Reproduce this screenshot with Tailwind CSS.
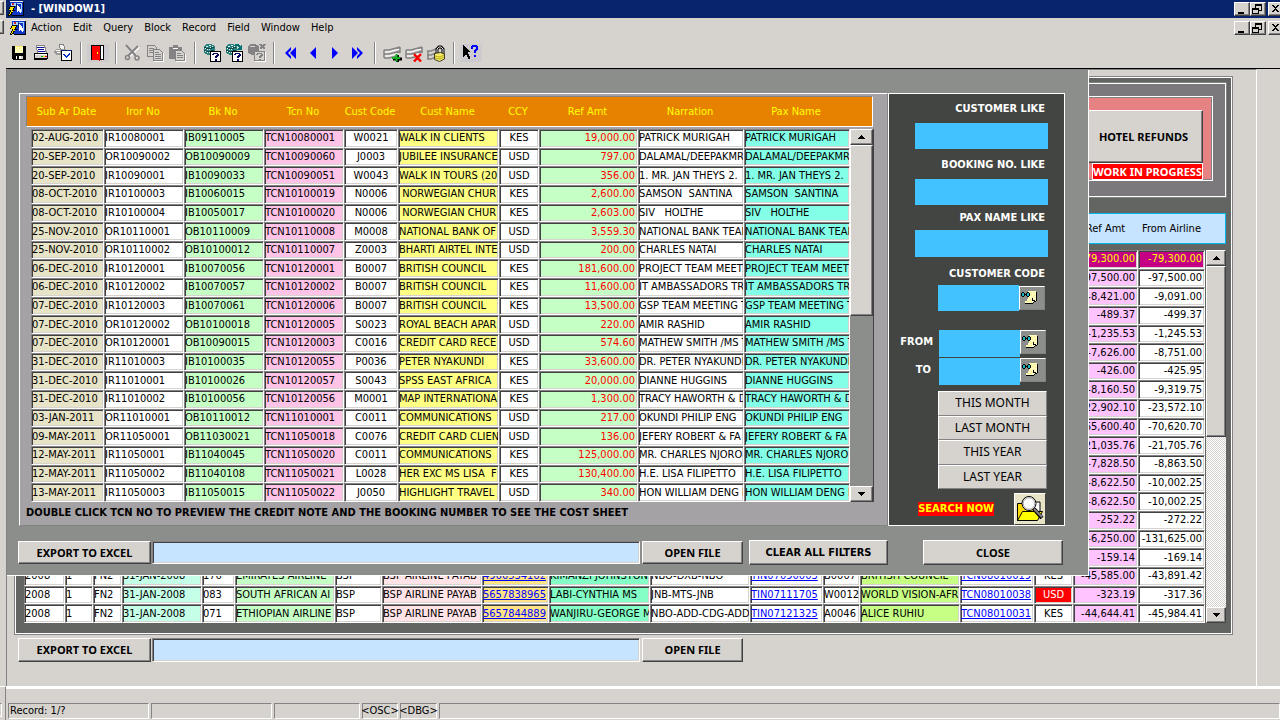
<!DOCTYPE html>
<html lang="en">
<head>
  <meta charset="UTF-8">
  <meta name="viewport" content="width=device-width, initial-scale=1.0">
  <title>WINDOW1</title>
  <script src="https://cdn.jsdelivr.net/npm/@tailwindcss/browser@4"></script>
</head>
<body class="relative h-screen overflow-hidden bg-[#d6d3ce] pl-[6px] flex flex-col text-[11px] leading-[14px] text-black font-['DejaVu_Sans_Condensed','Noto_Sans',sans-serif]">

  <!-- Shared shapes -->
  <svg class="hidden">
    <defs>
      <g id="appIcon" shape-rendering="crispEdges">
        <path fill="#f0f0f8" d="M2 0h13v1H2z"/>
        <path fill="#000" d="M15 1h1v14H4v-1h11z"/>
        <path fill="#1038c8" d="M2 1h13v13H4V9H2z"/>
        <path fill="#a8d4f8" d="M3 2h5v3H3zM9 2h5v1H9zM13 3h1v8h-1z"/>
        <path fill="#d02020" d="M4 2h2v2H4z"/>
        <path fill="#08246b" d="M8 3h1v5H8zM6 9h2v1H6z"/>
        <path fill="#fff" d="M9 4h1v7H9zM10 5h1v5h-1zM11 6h1v5h-1zM12 8h1v4h-1z"/>
        <path fill="#000" d="M2 5h5v2H6v2h1v1H5v2H4v2H2v1H0v-2h1v-2h1V9H0V8h1V6h1z"/>
        <path fill="#ffe800" d="M3 6h3v1H5v2H4v1h1v1H3v2H2v1H1v-1h1v-2h1V9H1V8h1V6z"/>
      </g>
      <g id="minIcon" shape-rendering="crispEdges"><path fill="#000" d="M3 9h6v2H3z"/></g>
      <g id="restoreIcon" shape-rendering="crispEdges"><path fill="#000" d="M4 1h7v7H8V7h2V3H5v2H4zM1 5h7v6H1zM2 7v3h5V7z" fill-rule="evenodd"/></g>
      <g id="closeIcon" shape-rendering="crispEdges"><path fill="#000" d="M3 2h2v1h1v1h1V3h1V2h2v1H9v1H8v1H7v1h1v1h1v1h1v1H8V8H7V7H6v1H5v1H3V8h1V7h1V6h1V5H5V4H4V3H3z"/></g>
      <g id="drum">
        <path fill="#2b8080" d="M2 1h1V0h6v1h2v1h1v8h-1v1H4v-1H2V9H1V2h1z"/>
        <path fill="#d8f0ec" d="M3 2h2v1H3zM6 1h2v1H6zM2 4h1v1H2zM4 5h1v1H4zM6 5h1v1H6zM8 4h1v1H8zM2 7h1v1H2zM4 8h1v1H4zM6 8h1v1H6zM9 2h1v1H9zM7 3h1v1H7z"/>
        <path fill="#184848" d="M1 3h2v1h5V3h3v1H9v1H3V4H1zM1 6h2v1h5V6h3v1H9v1H3V7H1z"/>
      </g>
      <g id="drumOff">
        <path fill="#848284" d="M2 1h1V0h6v1h2v1h1v8h-1v1H4v-1H2V9H1V2h1z"/>
        <path fill="#d6d3ce" d="M3 2h5v1H3z"/>
      </g>
      <g id="noteIcon" shape-rendering="crispEdges">
        <path fill="#fffbc0" d="M7 1h8v9l-3 3H4v-2h2V9h1z"/>
        <path fill="#ffe860" d="M9 2h1v1H9zM12 2h1v1h-1zM10 4h1v1h-1zM13 5h1v1h-1zM8 7h1v1H8zM11 7h1v1h-1zM9 9h1v1H9zM6 11h1v1H6zM9 11h1v1H9z"/>
        <path fill="#000" d="M15 2h1v9h-1zM13 11h2v1h-2zM12 12h1v1h-1zM4 13h8v1H4zM11 8h1v3h-1zM12 10h2v1h-2z"/>
        <path fill="#000" d="M0 3h1V2h2v1h1v1h1V3h1V2h2v1h1v3H8v1H6V6H5V5H4v1H3v1H1V6H0z"/>
        <path fill="#18b8c0" d="M1 3h2v3H1zM6 3h2v3H6z"/>
      </g>
    </defs>
  </svg>

  <!-- Edge of the window behind -->
  <div class="absolute left-0 top-0 w-1 h-9 overflow-hidden flex flex-col gap-[5px] pt-[1px]">
    <i class="h-[14px] border border-l-0 border-t-white border-r-[#424142] border-b-[#424142] shadow-[inset_-1px_-1px_0_#848284]"></i>
    <i class="h-[14px] border border-l-0 border-t-white border-r-[#424142] border-b-[#424142] shadow-[inset_-1px_-1px_0_#848284]"></i>
  </div>
  <div class="absolute left-0 bottom-0 w-[6px] h-[34px] border-t border-white border-r border-r-[#848284] pt-4 pr-[3px]">
    <i class="block h-[14px] border-y border-r border-t-[#848284] border-white"></i>
  </div>

  <!-- Title bar -->
  <header class="h-[18px] shrink-0 bg-[#08246b] flex items-center pl-[2px] text-white overflow-hidden">
    <svg width="16" height="16"><use href="#appIcon"/></svg>
    <h1 class="flex-1 pl-[7px] font-bold">- [WINDOW1]</h1>
    <div class="windowButtons flex -mr-1"></div>
  </header>

  <!-- Menu bar -->
  <nav class="h-5 shrink-0 flex items-center pl-1 overflow-hidden">
    <svg width="16" height="16"><use href="#appIcon"/></svg>
    <div class="flex-1 flex gap-[11px] pl-[5px]">
      <a href="#">Action</a>
      <a href="#">Edit</a>
      <a href="#">Query</a>
      <a href="#">Block</a>
      <a href="#">Record</a>
      <a href="#">Field</a>
      <a href="#">Window</a>
      <a href="#">Help</a>
    </div>
    <div class="windowButtons flex -mr-1"></div>
  </nav>

  <!-- Toolbar -->
  <div id="toolbar" class="h-[31px] shrink-0 flex items-center pl-[2px] border-b border-black">
    <button aria-label="Save" class="w-[22px] flex justify-center">
      <svg width="16" height="16" shape-rendering="crispEdges"><path fill="#000" d="M1 1h13l1 1v13H2l-1-1z"/><path fill="#ffffc0" d="M4 1h8v7H4z"/><path fill="#fff" d="M5 11h5v3H5z"/><path fill="#ffe860" d="M4 1h8v1H4zM5 3h1v1H5zM8 3h1v1H8zM6 5h1v1H6zM10 5h1v1h-1z"/><path fill="#000" d="M6 11h2v3H6z"/><path fill="#d6d3ce" d="M10 11h2v3h-2z"/></svg>
    </button>
    <button aria-label="Print" class="w-[22px] flex justify-center">
      <svg width="16" height="16" shape-rendering="crispEdges"><path fill="#fff" stroke="#848284" d="M3.500.5h8l2 8h-9z"/><path fill="#1010a0" d="M4 2h7v1H4zM5 4h6v1H5zM5 6h7v1H5z"/><path fill="#d6d3ce" stroke="#000" d="M1.500 8.500h13v5l-2 1h-11z"/><path fill="#fff" d="M2 9h12v1H2z"/><path fill="#f7e000" d="M10 11h2v1h-2z"/><path fill="#00a000" d="M8 11h2v1H8z"/><path fill="#e00000" d="M12 11h2v1h-2z"/><path fill="#000" d="M2 13h12v1H2z"/></svg>
    </button>
    <button aria-label="Printer Setup" class="w-[22px] flex justify-center">
      <svg width="18" height="18" shape-rendering="crispEdges"><path fill="#f4f4f4" stroke="#848284" d="M5.500.5h4l2 6h-5z"/><path fill="#9a9a9a" d="M2 5h10v6H3l-3-2V7z"/><path fill="#fff" d="M2 6h4v1H2zM3 8h3v1H3z"/><path fill="#fff" stroke="#000" d="M7.500 6.500h10v10h-10z"/><path fill="#0030c8" d="M9 10h2v1h1v1h1v-1h1v-1h1V9h1v2h-1v1h-1v1h-1v1h-1v-1h-1v-1h-1v-1H9z"/><path fill="#08246b" d="M7 6h11v1H7z"/></svg>
    </button>
    <span class="w-[13px] flex justify-center"><i class="h-[22px] border-l border-l-[#848284] border-r border-r-white"></i></span>
    <button aria-label="Exit" class="w-[22px] flex justify-center bg-[#cecbce]">
      <svg width="16" height="18" shape-rendering="crispEdges"><path fill="#000" d="M1 1h13v15H1z"/><path fill="#fff" d="M11 2h2v13h-2z"/><path fill="#f00" d="M2 2h7l1 1v14H9l-1-1H2z"/><path fill="#ffff00" d="M7 8h1v2H7z"/></svg>
    </button>
    <span class="w-[13px] flex justify-center"><i class="h-[22px] border-l border-l-[#848284] border-r border-r-white"></i></span>
    <button aria-label="Cut" class="w-[22px] flex justify-center">
      <svg width="18" height="18" fill="none"><path stroke="#fff" stroke-width="2" d="M3 2l10 11M15 3L5 13"/><path stroke="#848284" stroke-width="2" d="M2 1l10 11M14 2L4 12"/><circle cx="3.500" cy="13.500" r="2" stroke="#848284" stroke-width="1.500"/><circle cx="13" cy="14" r="2" stroke="#848284" stroke-width="1.500"/></svg>
    </button>
    <button aria-label="Copy" class="w-[22px] flex justify-center">
      <svg width="17" height="17" shape-rendering="crispEdges"><path fill="#d6d3ce" stroke="#848284" d="M.5.5h7l2 2v9h-9z"/><path stroke="#848284" d="M2 3.500h5M2 5.500h5M2 7.500h5"/><path fill="#d6d3ce" stroke="#848284" d="M6.500 4.500h6l3 3v8h-9z"/><path stroke="#848284" d="M8 7.500h4M8 9.500h6M8 11.500h6M8 13.500h6"/><path stroke="#fff" d="M7 16.500h10M16.500 8v8"/></svg>
    </button>
    <button aria-label="Paste" class="w-[22px] flex justify-center">
      <svg width="17" height="17" shape-rendering="crispEdges"><path fill="#848284" d="M0 2h4V0h5v2h4v12H0z"/><path fill="#fff" d="M4 3h5v1H4z"/><path fill="#d6d3ce" stroke="#848284" d="M6.500 5.500h6l3 3v7h-9z"/><path stroke="#848284" d="M8 8.500h4M8 10.500h6M8 12.500h6"/><path stroke="#fff" d="M7 16.500h10M16.500 9v7"/></svg>
    </button>
    <span class="w-[13px] flex justify-center"><i class="h-[22px] border-l border-l-[#848284] border-r border-r-white"></i></span>
    <button aria-label="Enter Query" class="w-[22px] flex justify-center">
      <svg width="18" height="18" shape-rendering="crispEdges"><use href="#drum"/><path fill="#fff" stroke="#000" d="M7.500 7.500h10v10h-10z"/><path fill="#08086b" d="M10 9h5v1h1v2h-1v1h-1v1h-2v-2h1v-1h1v-1h-3v1H9v-1h1zM12 15h2v2h-2z"/></svg>
    </button>
    <button aria-label="Execute Query" class="w-[22px] flex justify-center">
      <svg width="18" height="18" shape-rendering="crispEdges"><use href="#drum"/><path fill="#007070" d="M10 0h4v1h1v1h1V1h1v5h-5V5h1V4h1V3h-1V2h-3z"/><path fill="#fff" stroke="#000" d="M7.500 7.500h10v10h-10z"/><path fill="#08086b" d="M10 9h5v1h1v2h-1v1h-1v1h-2v-2h1v-1h1v-1h-3v1H9v-1h1zM12 15h2v2h-2z"/></svg>
    </button>
    <button aria-label="Cancel Query" class="w-[22px] flex justify-center">
      <svg width="19" height="18" shape-rendering="crispEdges"><use href="#drumOff"/><path stroke="#848284" stroke-width="2" d="M13 0l5 5M18 0l-5 5"/><path fill="#d6d3ce" stroke="#848284" d="M7.500 7.500h10v9h-10z"/><path fill="#848284" d="M10 9h5v1h1v2h-1v1h-1v1h-2v-2h1v-1h1v-1h-3v1H9v-1h1zM12 15h2v1h-2z"/><path stroke="#fff" d="M8 17.500h11M18.500 8v10"/></svg>
    </button>
    <span class="w-[13px] flex justify-center"><i class="h-[22px] border-l border-l-[#848284] border-r border-r-white"></i></span>
    <button aria-label="Previous Block" class="w-[22px] flex justify-center">
      <svg width="12" height="12" fill="#00f"><path d="M6 0L0 6l6 6V9L3 6l3-3z"/><path d="M11 0L5 6l6 6z"/></svg>
    </button>
    <button aria-label="Previous Record" class="w-[22px] flex justify-center">
      <svg width="8" height="12" fill="#00f"><path d="M7 0L1 6l6 6z"/></svg>
    </button>
    <button aria-label="Next Record" class="w-[22px] flex justify-center">
      <svg width="8" height="12" fill="#00f"><path d="M1 0l6 6-6 6z"/></svg>
    </button>
    <button aria-label="Next Block" class="w-[22px] flex justify-center">
      <svg width="12" height="12" fill="#00f"><path d="M6 0l6 6-6 6V9l3-3-3-3z"/><path d="M1 0l6 6-6 6z"/></svg>
    </button>
    <span class="w-[13px] flex justify-center"><i class="h-[22px] border-l border-l-[#848284] border-r border-r-white"></i></span>
    <button aria-label="Insert Record" class="w-[22px] flex justify-center">
      <svg width="19" height="17" fill="none"><path stroke="#848284" stroke-width="1.500" d="M1 5h5l11-3M1 9h5l11-3M1 13h5l8-2M1 5v8M17 2v6"/><path stroke="#fff" d="M2 7h4l10-3M2 11h4l8-2"/><path stroke="#000" stroke-width="3" d="M10 14h9M14.500 10v7"/><path stroke="#10b020" stroke-width="2" d="M9 13h8M13.500 9v7.500"/></svg>
    </button>
    <button aria-label="Delete Record" class="w-[22px] flex justify-center">
      <svg width="19" height="17" fill="none"><path stroke="#848284" stroke-width="1.500" d="M1 5h5l11-3M1 9h5l11-3M1 13h5l8-2M1 5v8M17 2v6"/><path stroke="#fff" d="M2 7h4l10-3M2 11h4l8-2"/><path stroke="#f00" stroke-width="2.500" d="M9 9l7 7.500M16 9l-7 7.500"/></svg>
    </button>
    <button aria-label="Lock Record" class="w-[22px] flex justify-center">
      <svg width="19" height="17" fill="none"><path stroke="#848284" stroke-width="1.500" d="M0 6h4l5-2M0 10h4l5-2M0 14h4l5-2M1 6v8"/><path stroke="#000" stroke-width="3" d="M10 8V4l2-2h2l2 2v5"/><path stroke="#ddd" d="M10 8V4l2-2h2l2 2v5"/><path fill="#f4ea60" stroke="#000" stroke-width=".7" d="M7.500 8.500l6-1 4 1.500v5l-5 2.500-5-2z"/><path stroke="#a09000" stroke-width=".7" d="M8 11l5 1 4-2M8 13l5 1 4-2"/></svg>
    </button>
    <span class="w-[13px] flex justify-center"><i class="h-[22px] border-l border-l-[#848284] border-r border-r-white"></i></span>
    <button aria-label="Help" class="w-[22px] flex justify-center bg-[#cecbce]">
      <svg width="18" height="18" shape-rendering="crispEdges"><path fill="#000" d="M1 1l7 7H6v2h1v2h1v3H6v-2H5v-2H4L1 13z"/><path fill="#00f" d="M10 1h5v1h1v4h-1v1h-1v2h-2V6h1V5h1V3h-3v2H9V2h1zM12 11h2v2h-2z"/></svg>
    </button>
  </div>

  <!-- Form canvas -->
  <main class="relative flex-1 min-h-0 mr-[23px] border-t border-l border-[#848284] border-r border-r-white">

    <!-- Refunds panel -->
    <section class="ml-2 mt-[7px] mr-6 border border-white shadow-[0_0_0_1px_#848284] bg-[#636563] pl-2 pr-[5px] pt-[5px] pb-[10px]">
      <div class="h-[114px] border border-white shadow-[0_0_0_1px_#848284] bg-[#7b797b] pt-3 pr-3 flex justify-end items-start">
        <div class="w-[600px] h-[85px] border border-white shadow-[inset_0_0_0_1px_#848284] bg-[#e78284] pt-[13px] pr-[9px] flex flex-col items-end">
          <button class="w-[119px] h-14 bg-[#d6d3ce] border border-white border-r-[#424142] border-b-[#424142] shadow-[inset_-1px_-1px_0_#848284] font-bold font-['Noto_Sans',sans-serif]">HOTEL REFUNDS</button>
          <span class="relative z-10 h-[17px] leading-4 border border-white bg-[#f00] text-white font-bold font-['Noto_Sans',sans-serif]">WORK IN PROGRESS</span>
        </div>
      </div>
      <div class="mt-4 h-[31px] border border-[#00b6ef] bg-[#c6e3ff] flex justify-end items-center text-center pr-5">
        <span class="w-[65px]">Ref Amt</span>
        <span class="w-[67px]">From Airline</span>
      </div>
      <div class="mt-[6px] flex">
        <table class="flex-1 w-full table-fixed h-[373px] border-separate border-spacing-0">
          <colgroup id="refundCols"></colgroup>
          <tbody id="refundRows"></tbody>
        </table>
        <div class="w-5 ml-px flex flex-col bg-[repeating-conic-gradient(#ffffff_0_25%,#d6d3ce_0_50%)] bg-size-[2px_2px]">
          <button aria-label="Scroll up" class="h-4 flex items-center justify-center bg-[#d6d3ce] border border-white border-r-[#424142] border-b-[#424142] shadow-[inset_-1px_-1px_0_#848284]"><svg width="7" height="4" shape-rendering="crispEdges"><path d="M3 0h1v1h1v1h1v1h1v1H0V3h1V2h1V1h1z"/></svg></button>
          <div class="h-[171px] bg-[#d6d3ce] border border-white border-r-[#424142] border-b-[#424142] shadow-[inset_-1px_-1px_0_#848284]"></div>
          <button aria-label="Scroll down" class="mt-auto h-4 flex items-center justify-center bg-[#d6d3ce] border border-white border-r-[#424142] border-b-[#424142] shadow-[inset_-1px_-1px_0_#848284]"><svg width="7" height="4" shape-rendering="crispEdges"><path d="M0 0h7v1H6v1H5v1H4v1H3V3H2V2H1V1H0z"/></svg></button>
        </div>
      </div>
    </section>

    <div class="ml-[11px] mt-1 flex items-center">
      <button class="w-[133px] h-6 bg-[#d6d3ce] border border-white border-r-[#424142] border-b-[#424142] shadow-[inset_-1px_-1px_0_#848284] font-bold font-['Noto_Sans',sans-serif]">EXPORT TO EXCEL</button>
      <input type="text" aria-label="Refund export file" class="w-[488px] h-6 ml-px px-1 bg-[#c6e3ff] border border-[#848284] border-r-white border-b-white shadow-[inset_1px_1px_0_#424142,inset_-1px_-1px_0_#d6d3ce]">
      <button class="w-[101px] h-6 ml-[2px] bg-[#d6d3ce] border border-white border-r-[#424142] border-b-[#424142] shadow-[inset_-1px_-1px_0_#848284] font-bold font-['Noto_Sans',sans-serif]">OPEN FILE</button>
    </div>

    <!-- Credit note search window -->
    <section class="absolute left-0 top-0 right-[167px] h-[506px] bg-[#8c8e8c] border-r border-b border-white pt-[23px] pl-3">
      <div class="flex pr-[23px]">
        <div class="flex-1 min-w-0 border border-white border-r-[#848284] border-b-[#848284] bg-[#a5a2a5] pt-[2px] pl-[6px]">
          <div id="creditHead" class="h-[31px] mr-[14px] pl-[3px] pr-[23px] flex items-center text-center text-[#ff0] bg-[#e78200] border border-[#848284] border-r-white border-b-white"></div>
          <div class="mt-[2px] ml-[5px] mr-[13px] flex">
            <table class="flex-1 w-full table-fixed h-[373px] border-separate border-spacing-0">
              <colgroup id="creditCols"></colgroup>
              <tbody id="creditRows"></tbody>
            </table>
            <div class="w-6 flex flex-col bg-[#8c8e8c] border-r border-[#424142]">
              <button aria-label="Scroll up" class="h-4 flex items-center justify-center bg-[#d6d3ce] border border-white border-r-[#424142] border-b-[#424142] shadow-[inset_-1px_-1px_0_#848284]"><svg width="7" height="4" shape-rendering="crispEdges"><path d="M3 0h1v1h1v1h1v1h1v1H0V3h1V2h1V1h1z"/></svg></button>
              <div class="h-[171px] bg-[#d6d3ce] border border-white border-r-[#424142] border-b-[#424142] shadow-[inset_-1px_-1px_0_#848284]"></div>
              <button aria-label="Scroll down" class="mt-auto h-4 flex items-center justify-center bg-[#d6d3ce] border border-white border-r-[#424142] border-b-[#424142] shadow-[inset_-1px_-1px_0_#848284]"><svg width="7" height="4" shape-rendering="crispEdges"><path d="M0 0h7v1H6v1H5v1H4v1H3V3H2V2H1V1H0z"/></svg></button>
            </div>
          </div>
          <p class="h-[21px] leading-[22px] whitespace-nowrap font-bold">DOUBLE CLICK TCN NO TO PREVIEW THE CREDIT NOTE AND THE BOOKING NUMBER TO SEE THE COST SHEET</p>
        </div>

        <!-- Filters -->
        <form class="w-[177px] shrink-0 border border-white bg-[#424542] pr-4 flex flex-col items-end text-white">
          <label for="customer" class="h-[29px] leading-[30px] pr-[3px] font-bold">CUSTOMER LIKE</label>
          <input id="customer" type="text" class="w-[133px] h-[26px] px-1 bg-[#42c3ff] text-black">
          <label for="booking" class="h-[30px] leading-[31px] pr-[3px] font-bold">BOOKING NO. LIKE</label>
          <input id="booking" type="text" class="w-[133px] h-[26px] px-1 bg-[#42c3ff] text-black">
          <label for="pax" class="h-[25px] leading-[25px] pr-[3px] font-bold">PAX NAME LIKE</label>
          <input id="pax" type="text" class="w-[133px] h-[27px] px-1 bg-[#42c3ff] text-black">
          <label for="code" class="h-7 leading-[34px] pr-[3px] font-bold">CUSTOMER CODE</label>
          <div class="flex items-center pr-[3px]">
            <input id="code" type="text" class="w-[81px] h-[26px] px-1 bg-[#42c3ff] text-black">
            <button type="button" aria-label="Find customer code" class="w-[26px] h-6 pt-px pl-px bg-[#8c8e8c] border border-white border-r-[#848284] border-b-[#848284]"><svg width="20" height="18"><use href="#noteIcon"/></svg></button>
          </div>
          <div class="mt-[19px] flex items-start pr-[2px]">
            <label for="from" class="pr-[6px] leading-6 font-bold">FROM</label>
            <input id="from" type="text" class="w-[81px] h-[27px] px-1 bg-[#42c3ff] text-black">
            <button type="button" aria-label="Pick start date" class="w-[26px] h-6 pt-px pl-px bg-[#8c8e8c] border border-white border-r-[#848284] border-b-[#848284]"><svg width="20" height="18"><use href="#noteIcon"/></svg></button>
          </div>
          <div class="mt-px flex items-start pr-[2px]">
            <label for="to" class="pr-2 leading-6 font-bold">TO</label>
            <input id="to" type="text" class="w-[81px] h-[27px] px-1 bg-[#42c3ff] text-black">
            <button type="button" aria-label="Pick end date" class="w-[26px] h-6 pt-px pl-px bg-[#8c8e8c] border border-white border-r-[#848284] border-b-[#848284]"><svg width="20" height="18"><use href="#noteIcon"/></svg></button>
          </div>
          <div class="mt-[6px] mr-px w-[109px] h-[98px] grid grid-rows-4 text-[12px] text-black font-['Noto_Sans',sans-serif]">
            <button type="button" class="bg-[#d6d3ce] border border-white border-r-[#848284] border-b-[#848284]">THIS MONTH</button>
            <button type="button" class="bg-[#d6d3ce] border border-white border-r-[#848284] border-b-[#848284]">LAST MONTH</button>
            <button type="button" class="bg-[#d6d3ce] border border-white border-r-[#848284] border-b-[#848284]">THIS YEAR</button>
            <button type="button" class="bg-[#d6d3ce] border border-white border-r-[#848284] border-b-[#848284]">LAST YEAR</button>
          </div>
          <div class="mt-1 flex items-center gap-5 pr-[2px]">
            <label for="search" class="bg-[#f00] text-[#ff0] font-bold">SEARCH NOW</label>
            <button id="search" type="button" class="w-8 h-8 bg-[#e7e3c6] border border-white border-r-[#424142] border-b-[#424142]">
              <svg width="30" height="30" viewBox="0 0 30 30"><path fill="#ffd800" stroke="#000" d="M2.500 27V9.500h5l2 2h13V20"/><path fill="#fff" stroke="#000" d="M19 8h6v11h-6z"/><path fill="#ffff00" stroke="#000" d="M2.500 26.500l5-9h20l-5 9z"/><path stroke="#000" stroke-width="4" d="M19 15l8 9"/><path stroke="#848284" stroke-width="2" d="M19 15l8 8"/><circle cx="14" cy="9.500" r="7" fill="#fff" stroke="#000"/><circle cx="14" cy="9.500" r="5.800" fill="none" stroke="#a5a2a5"/></svg>
            </button>
          </div>
        </form>
      </div>

      <div class="mt-[14px] -ml-px mr-[25px] flex items-center">
        <button class="w-[133px] h-[23px] bg-[#d6d3ce] border border-white border-r-[#424142] border-b-[#424142] shadow-[inset_-1px_-1px_0_#848284] font-bold font-['Noto_Sans',sans-serif]">EXPORT TO EXCEL</button>
        <input type="text" aria-label="Credit note export file" class="flex-1 min-w-0 h-[23px] ml-px mr-[2px] px-1 bg-[#c6e3ff] border border-[#848284] border-r-white border-b-white shadow-[inset_1px_1px_0_#424142,inset_-1px_-1px_0_#d6d3ce]">
        <button class="w-[101px] h-[23px] bg-[#d6d3ce] border border-white border-r-[#424142] border-b-[#424142] shadow-[inset_-1px_-1px_0_#848284] font-bold font-['Noto_Sans',sans-serif]">OPEN FILE</button>
        <button class="w-[139px] h-[25px] ml-[6px] bg-[#d6d3ce] border border-white border-r-[#424142] border-b-[#424142] shadow-[inset_-1px_-1px_0_#848284] font-bold">CLEAR ALL FILTERS</button>
        <button class="w-[140px] h-[25px] ml-[35px] bg-[#d6d3ce] border border-white border-r-[#424142] border-b-[#424142] shadow-[inset_-1px_-1px_0_#848284] font-bold font-['Noto_Sans',sans-serif]">CLOSE</button>
      </div>
    </section>
  </main>

  <!-- Status bar -->
  <footer class="h-[34px] shrink-0 border-t-[3px] border-white pt-[14px] pl-[2px] flex items-start gap-[2px] *:h-4 *:border *:border-[#848284] *:border-r-white *:border-b-white">
    <span class="w-[141px] pl-px">Record: 1/?</span>
    <span class="w-[121px]"></span>
    <span class="w-[86px]"></span>
    <span class="w-[36px] flex justify-center">&lt;OSC&gt;</span>
    <span class="w-[37px] flex justify-center">&lt;DBG&gt;</span>
    <span class="flex-1"></span>
  </footer>

  <script>
  // Window buttons
document.querySelectorAll(".windowButtons").forEach((box) => {
  box.innerHTML = [["minIcon", "Minimize"], ["restoreIcon", "Restore"], ["closeIcon", "Close"]].map(([icon, label]) => `
    <button aria-label="${label}" class="w-4 h-[14px] last:ml-[2px] bg-[#d6d3ce] border border-white border-r-[#424142] border-b-[#424142] shadow-[inset_-1px_-1px_0_#848284]"><svg width="13" height="12"><use href="#${icon}"/></svg></button>
  `).join("");
});

const cell = "p-0 overflow-hidden whitespace-pre border border-[#848284] border-r-white border-b-white shadow-[inset_1px_1px_0_#424142,inset_-1px_-1px_0_#d6d3ce]";

// Credit notes
const creditColumns = [
  { name: "Sub Ar Date", width: 73, style: "bg-[#e7e3c6]" },
  { name: "Iror No", width: 80, style: "bg-white" },
  { name: "Bk No", width: 80, style: "bg-[#c6ffc6]" },
  { name: "Tcn No", width: 80, style: "bg-[#ffc3e7]" },
  { name: "Cust Code", width: 54, style: "bg-white text-center" },
  { name: "Cust Name", width: 101, style: "bg-[#ffff84]" },
  { name: "CCY", width: 40, style: "bg-white text-center" },
  { name: "Ref Amt", width: 99, style: "bg-[#c6ffc6] text-right text-[#f00] pr-[2px]" },
  { name: "Narration", width: 106, style: "bg-white" },
  { name: "Pax Name", width: 106, style: "bg-[#84ffe7]" }
];

const credits = [
  ["02-AUG-2010", "IR10080001", "IB09110005", "TCN10080001", "W0021", "WALK IN CLIENTS", "KES", "19,000.00", "PATRICK MURIGAH"],
  ["20-SEP-2010", "OR10090002", "OB10090009", "TCN10090060", "J0003", "JUBILEE INSURANCE", "USD", "797.00", "DALAMAL/DEEPAKMR"],
  ["20-SEP-2010", "IR10090001", "IB10090033", "TCN10090051", "W0043", "WALK IN TOURS (20", "USD", "356.00", "1. MR. JAN THEYS 2."],
  ["08-OCT-2010", "IR10100003", "IB10060015", "TCN10100019", "N0006", " NORWEGIAN CHUR", "KES", "2,600.00", "SAMSON  SANTINA"],
  ["08-OCT-2010", "IR10100004", "IB10050017", "TCN10100020", "N0006", " NORWEGIAN CHUR", "KES", "2,603.00", "SIV   HOLTHE"],
  ["25-NOV-2010", "OR10110001", "OB10110009", "TCN10110008", "M0008", "NATIONAL BANK OF", "USD", "3,559.30", "NATIONAL BANK TEAM"],
  ["25-NOV-2010", "OR10110002", "OB10100012", "TCN10110007", "Z0003", "BHARTI AIRTEL INTE", "USD", "200.00", "CHARLES NATAI"],
  ["06-DEC-2010", "IR10120001", "IB10070056", "TCN10120001", "B0007", "BRITISH COUNCIL", "KES", "181,600.00", "PROJECT TEAM MEET"],
  ["06-DEC-2010", "IR10120002", "IB10070057", "TCN10120002", "B0007", "BRITISH COUNCIL", "KES", "11,600.00", "IT AMBASSADORS TR"],
  ["07-DEC-2010", "IR10120003", "IB10070061", "TCN10120006", "B0007", "BRITISH COUNCIL", "KES", "13,500.00", "GSP TEAM MEETING T"],
  ["07-DEC-2010", "OR10120002", "OB10100018", "TCN10120005", "S0023", "ROYAL BEACH APAR", "USD", "220.00", "AMIR RASHID"],
  ["07-DEC-2010", "OR10120001", "OB10090015", "TCN10120003", "C0016", "CREDIT CARD RECE", "USD", "574.60", "MATHEW SMITH /MS T"],
  ["31-DEC-2010", "IR11010003", "IB10100035", "TCN10120055", "P0036", "PETER NYAKUNDI", "KES", "33,600.00", "DR. PETER NYAKUNDI"],
  ["31-DEC-2010", "IR11010001", "IB10100026", "TCN10120057", "S0043", "SPSS EAST AFRICA", "KES", "20,000.00", "DIANNE HUGGINS"],
  ["31-DEC-2010", "IR11010002", "IB10100056", "TCN10120056", "M0001", "MAP INTERNATIONAL", "KES", "1,300.00", "TRACY HAWORTH & D"],
  ["03-JAN-2011", "OR11010001", "OB10110012", "TCN11010001", "C0011", "COMMUNICATIONS", "USD", "217.00", "OKUNDI PHILIP ENG"],
  ["09-MAY-2011", "OR11050001", "OB11030021", "TCN11050018", "C0076", "CREDIT CARD CLIEN", "USD", "136.00", "JEFERY ROBERT & FA"],
  ["12-MAY-2011", "IR11050001", "IB11040045", "TCN11050020", "C0011", "COMMUNICATIONS", "KES", "125,000.00", "MR. CHARLES NJORO"],
  ["12-MAY-2011", "IR11050002", "IB11040108", "TCN11050021", "L0028", "HER EXC MS LISA  F", "KES", "130,400.00", "H.E. LISA FILIPETTO"],
  ["13-MAY-2011", "IR11050003", "IB11050015", "TCN11050022", "J0050", "HIGHLIGHT TRAVEL", "USD", "340.00", "HON WILLIAM DENG D"]
];

document.getElementById("creditHead").innerHTML = creditColumns.map(c => `<span class="whitespace-nowrap" style="flex:${c.width} 1 0">${c.name}</span>`).join("");
document.getElementById("creditCols").innerHTML = creditColumns.map(c => `<col style="width:${c.width}px">`).join("");
document.getElementById("creditRows").innerHTML = credits.map((row) => {
  // the passenger name repeats the narration
  const values = [...row, row[8]];
  return `<tr>${values.map((v, i) => `<td class="${cell} ${creditColumns[i].style}">${v.replace("&", "&amp;")}</td>`).join("")}</tr>`;
}).join("");

// Refunds
const refundColumns = [
  { width: 41, style: "bg-white" },
  { width: 28, style: "bg-white" },
  { width: 29, style: "bg-white" },
  { width: 80, style: "bg-[#c6ffe7]" },
  { width: 33, style: "bg-white" },
  { width: 100, style: "bg-[#c6ffc6]" },
  { width: 47, style: "bg-white" },
  { width: 100, style: "bg-[#ffe3e7]" },
  { width: 67, style: "bg-[#ffe384]", link: true },
  { width: 101, style: "bg-[#84ffc6]" },
  { width: 100, style: "bg-white" },
  { width: 73, style: "bg-white", link: true },
  { width: 37, style: "bg-white" },
  { width: 100, style: "bg-[#c6ff84]" },
  { width: 74, style: "bg-white", link: true },
  { width: 39, style: "bg-white text-center" },
  { width: 65, style: "bg-[#ffc3ff] text-right pr-[2px]" },
  { width: 67, style: "bg-white text-right pr-[2px]" }
];

const amounts = [
  ["-79,300.00", "-79,300.00"], ["-97,500.00", "-97,500.00"], ["-8,421.00", "-9,091.00"], ["-489.37", "-499.37"],
  ["-1,235.53", "-1,245.53"], ["-7,626.00", "-8,751.00"], ["-426.00", "-425.95"], ["-8,160.50", "-9,319.75"],
  ["-22,902.10", "-23,572.10"], ["-65,600.40", "-70,620.70"], ["-21,035.76", "-21,705.76"], ["-7,828.50", "-8,863.50"],
  ["-8,622.50", "-10,002.25"], ["-8,622.50", "-10,002.25"], ["-252.22", "-272.22"], ["-6,250.00", "-131,625.00"],
  ["-159.14", "-169.14"], ["-45,585.00", "-43,891.42"], ["-323.19", "-317.36"], ["-44,644.41", "-45,984.41"]
];

const details = {
  17: ["2008", "1", "FN2", "31-JAN-2008", "176", "EMIRATES AIRLINE", "BSP", "BSP AIRLINE PAYAB", "4960534162", "KIMANZI JOHNSTON", "NBO-DXB-NBO", "TIN07090003", "B0007", "BRITISH COUNCIL", "TCN08010019", "KES"],
  18: ["2008", "1", "FN2", "31-JAN-2008", "083", "SOUTH AFRICAN AI", "BSP", "BSP AIRLINE PAYAB", "5657838965", "LABI-CYNTHIA MS", "JNB-MTS-JNB", "TIN07111705", "W0012", "WORLD VISION-AFR", "TCN08010038", "USD"],
  19: ["2008", "1", "FN2", "31-JAN-2008", "071", "ETHIOPIAN AIRLINE", "BSP", "BSP AIRLINE PAYAB", "5657844889", "WANJIRU-GEORGE M", "NBO-ADD-CDG-ADD", "TIN07121325", "A0046", "ALICE RUHIU", "TCN08010031", "KES"]
};

document.getElementById("refundCols").innerHTML = refundColumns.map(c => `<col style="width:${c.width}px">`).join("");
document.getElementById("refundRows").innerHTML = amounts.map((pair, n) => {
  const values = [...(details[n] || Array(16).fill("")), ...pair];
  return `<tr>${values.map((v, i) => {
    let style = refundColumns[i].style;
    if (n === 0 && i > 15) style = "bg-[#c60084] text-[#ff0] text-right pr-[2px]";
    if (v === "USD") style = "bg-[#f00] text-white text-center";
    const text = refundColumns[i].link && v ? `<a href="#" class="text-[#00f] underline">${v}</a>` : v;
    return `<td class="${cell} ${style}">${text}</td>`;
  }).join("")}</tr>`;
}).join("");
  </script>

</body>
</html>
